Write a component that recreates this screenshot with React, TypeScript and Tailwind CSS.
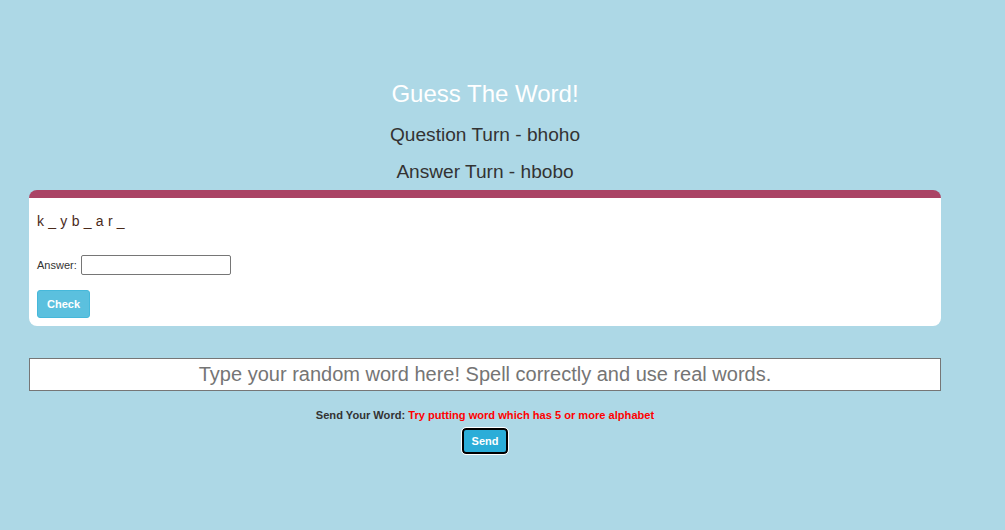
export default function App() {
  return (
    <div
      className="min-h-[530px] w-full bg-[#add8e6] pt-[78px]"
      style={{ fontFamily: '"Liberation Sans", Arial, sans-serif' }}
    >
      <div className="ml-[29px] w-[912px]">
        <h1 className="text-center text-[24px] leading-[32px] text-white">Guess The Word!</h1>
        <h2 className="mt-[13px] text-center text-[19.1px] leading-[24px] text-[#333]">Question Turn - bhoho</h2>
        <h2 className="mt-[13px] text-center text-[19.1px] leading-[24px] text-[#333]">Answer Turn - hbobo</h2>

        <div className="mt-[6px] rounded-[8px] border-t-[8px] border-[#aa4465] bg-white px-[8px] pb-[8px] pt-[14px]">
          <p className="text-[14px] leading-[18px] tracking-[0.2px] text-[#4a2a1a]">k _ y b _ a r _</p>
          <div className="mt-[25px] flex items-center gap-[4px]">
            <label className="text-[11px] text-[#333]">Answer:</label>
            <input
              type="text"
              className="h-[20px] w-[150px] rounded-[2px] border border-[#767676] bg-white px-[2px] text-[12px] outline-none"
            />
          </div>
          <button className="mt-[15px] h-[28px] w-[53px] rounded-[3px] border border-[#46b8da] bg-[#5bc0de] text-[11px] font-bold text-white">
            Check
          </button>
        </div>

        <input
          type="text"
          placeholder="Type your random word here! Spell correctly and use real words."
          className="mt-[32px] h-[33px] w-full border border-[#767676] bg-white text-center text-[20px] text-[#333] outline-none placeholder:text-[#757575]"
        />

        <p className="mt-[17px] text-center text-[11.1px] font-bold leading-[14px] text-[#333]">
          Send Your Word: <span className="text-[#ff0000]">Try putting word which has 5 or more alphabet</span>
        </p>
        <div className="mt-[6px] flex justify-center">
          <button className="h-[26px] w-[46px] rounded-[4px] border-2 border-black bg-[#2badd8] text-[11px] font-bold text-white outline outline-1 outline-white">
            Send
          </button>
        </div>
      </div>
    </div>
  );
}
